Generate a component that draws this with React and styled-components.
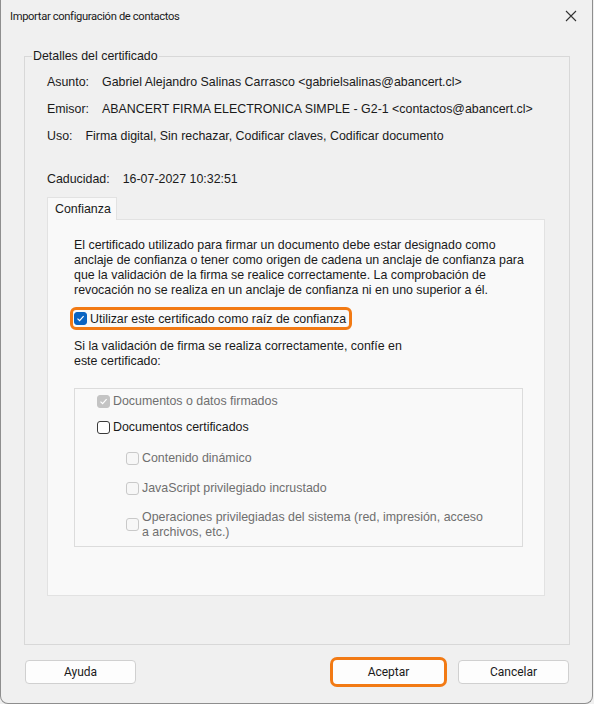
import React from "react";
import styled, { createGlobalStyle } from "styled-components";

const GlobalStyle = createGlobalStyle`
  html, body {
    margin: 0;
    padding: 0;
    background: #f0f0f0;
  }
  * {
    box-sizing: border-box;
  }
`;

const ORANGE = "#f27a14";
const UI_FONT = `Roboto, "Segoe UI", sans-serif`;

const Window = styled.div`
  width: 593px;
  height: 704px;
  background: #f0f0f0;
  border: 1px solid #8e8e8e;
  border-top: none;
  border-radius: 0 0 8px 8px;
  display: flex;
  flex-direction: column;
  font-family: "Liberation Sans", Arial, sans-serif;
  font-size: 12.4px;
  color: #1a1a1a;
`;

const TitleBar = styled.div`
  height: 32px;
  display: flex;
  align-items: center;
  justify-content: space-between;
  padding: 0 8px 0 9px;
`;

const Title = styled.span`
  font-family: ${UI_FONT};
  font-size: 11.2px;
  letter-spacing: -0.35px;
  color: #1a1a1a;
`;

const CloseButton = styled.button`
  width: 24px;
  height: 24px;
  border: none;
  background: transparent;
  display: flex;
  align-items: center;
  justify-content: center;
  padding: 0;
  margin-right: 1px;
`;

const Group = styled.fieldset`
  margin: 16px 22px 0 23px;
  padding: 4px 24px 0 22px;
  border: 1px solid #d8d8d8;
  height: 597px;
  min-width: 0;
`;

const Legend = styled.legend`
  padding: 0 1px;
  margin-left: -15px;
  line-height: 16px;
  color: #1a1a1a;
`;

const InfoRow = styled.div`
  display: flex;
  gap: 13px;
  height: 27px;
  align-items: center;
  margin-top: ${(p) => p.$gap || 0}px;
  white-space: nowrap;
`;

const TabStrip = styled.div`
  margin-top: 5px;
  display: flex;
`;

const Tab = styled.div`
  height: 23px;
  width: 70px;
  padding-left: 7px;
  display: flex;
  align-items: center;
  background: #f9f9f9;
  border: 1px solid #e2e2e2;
  border-bottom: none;
  margin-bottom: -1px;
  position: relative;
  z-index: 1;
`;

const TabPanel = styled.div`
  height: 377px;
  background: #f9f9f9;
  border: 1px solid #e2e2e2;
  padding: 18px 20px 0 26px;
`;

const Paragraph = styled.p`
  margin: 0;
  line-height: 15px;
  margin-top: ${(p) => p.$top || 0}px;
`;

const Highlight = styled.label`
  display: inline-flex;
  align-items: center;
  gap: 3px;
  height: 23px;
  margin: 9px 0 0 -4px;
  padding: 0 3px 0 1px;
  border: 3px solid ${ORANGE};
  border-radius: 6px;
  white-space: nowrap;
`;

const Options = styled.div`
  margin-top: 19px;
  width: 449px;
  height: 159px;
  border: 1px solid #dcdcdc;
  padding: 0 0 0 22px;
`;

const OptionRow = styled.label`
  display: flex;
  align-items: ${(p) => (p.$multi ? "flex-start" : "center")};
  gap: 3px;
  min-height: ${(p) => p.$height || 26}px;
  padding-left: ${(p) => (p.$nested ? 29 : 0)}px;
  padding-top: ${(p) => p.$pad || 0}px;
  line-height: 15px;
  color: ${(p) => (p.$disabled ? "#6f6f6f" : "#1a1a1a")};
`;

const BoxWrap = styled.span`
  display: flex;
  align-items: center;
  height: 15px;
  margin-top: ${(p) => p.$shift || 0}px;
`;

const Box = styled.span`
  width: 13px;
  height: 13px;
  flex: none;
  border-radius: 3px;
  display: flex;
  align-items: center;
  justify-content: center;
  background: ${(p) =>
    p.$checked ? (p.$disabled ? "#c4c4c4" : "#0a64c2") : p.$disabled ? "#f7f7f7" : "#ffffff"};
  border: 1px solid
    ${(p) =>
      p.$checked ? (p.$disabled ? "#c4c4c4" : "#0a64c2") : p.$disabled ? "#c9c9c9" : "#3a3a3a"};
`;

const Footer = styled.div`
  margin-top: 15px;
  padding: 0 23px 0 24px;
  display: flex;
  justify-content: space-between;
`;

const ButtonGroup = styled.div`
  display: flex;
  gap: 14px;
`;

const Button = styled.button`
  width: 111px;
  height: 24px;
  border: 1px solid ${(p) => (p.$default ? "transparent" : "#d0d0d0")};
  border-radius: 4px;
  background: #fdfdfd;
  font-family: ${UI_FONT};
  font-size: 12px;
  color: #1a1a1a;
  padding: 0;
  box-shadow: ${(p) => (p.$default ? `0 0 0 3px ${ORANGE}` : "none")};
`;

function Check({ checked, disabled, shift }) {
  return (
    <BoxWrap $shift={shift}>
      <Box $checked={checked} $disabled={disabled}>
        {checked && (
          <svg width="9" height="9" viewBox="0 0 9 9">
            <path d="M1.5 4.6 L3.6 6.7 L7.6 2.2" fill="none" stroke="#fff" strokeWidth="1.2" />
          </svg>
        )}
      </Box>
    </BoxWrap>
  );
}

export default function App() {
  return (
    <>
      <GlobalStyle />
      <Window>
        <TitleBar>
          <Title>Importar configuración de contactos</Title>
          <CloseButton aria-label="Cerrar">
            <svg width="12" height="12" viewBox="0 0 12 12">
              <path d="M1 1 L11 11 M11 1 L1 11" stroke="#333" strokeWidth="1.1" />
            </svg>
          </CloseButton>
        </TitleBar>

        <Group>
          <Legend>Detalles del certificado</Legend>
          <InfoRow>
            <span>Asunto:</span>
            <span>Gabriel Alejandro Salinas Carrasco &lt;gabrielsalinas@abancert.cl&gt;</span>
          </InfoRow>
          <InfoRow>
            <span>Emisor:</span>
            <span>ABANCERT FIRMA ELECTRONICA SIMPLE - G2-1 &lt;contactos@abancert.cl&gt;</span>
          </InfoRow>
          <InfoRow>
            <span>Uso:</span>
            <span>Firma digital, Sin rechazar, Codificar claves, Codificar documento</span>
          </InfoRow>
          <InfoRow $gap={16}>
            <span>Caducidad:</span>
            <span>16-07-2027 10:32:51</span>
          </InfoRow>

          <TabStrip>
            <Tab>Confianza</Tab>
          </TabStrip>
          <TabPanel>
            <Paragraph>
              El certificado utilizado para firmar un documento debe estar designado como
              <br />
              anclaje de confianza o tener como origen de cadena un anclaje de confianza para
              <br />
              que la validación de la firma se realice correctamente. La comprobación de
              <br />
              revocación no se realiza en un anclaje de confianza ni en uno superior a él.
            </Paragraph>
            <Highlight>
              <Check checked />
              Utilizar este certificado como raíz de confianza
            </Highlight>
            <Paragraph $top={9}>
              Si la validación de firma se realiza correctamente, confíe en
              <br />
              este certificado:
            </Paragraph>

            <Options>
              <OptionRow $disabled $height={24}>
                <Check checked disabled />
                Documentos o datos firmados
              </OptionRow>
              <OptionRow $height={29}>
                <Check />
                Documentos certificados
              </OptionRow>
              <OptionRow $nested $disabled $height={32}>
                <Check disabled />
                Contenido dinámico
              </OptionRow>
              <OptionRow $nested $disabled $height={28}>
                <Check disabled />
                JavaScript privilegiado incrustado
              </OptionRow>
              <OptionRow $nested $disabled $multi $pad={8}>
                <Check disabled shift={7} />
                <span>
                  Operaciones privilegiadas del sistema (red, impresión, acceso
                  <br />a archivos, etc.)
                </span>
              </OptionRow>
            </Options>
          </TabPanel>
        </Group>

        <Footer>
          <Button>Ayuda</Button>
          <ButtonGroup>
            <Button $default>Aceptar</Button>
            <Button>Cancelar</Button>
          </ButtonGroup>
        </Footer>
      </Window>
    </>
  );
}
